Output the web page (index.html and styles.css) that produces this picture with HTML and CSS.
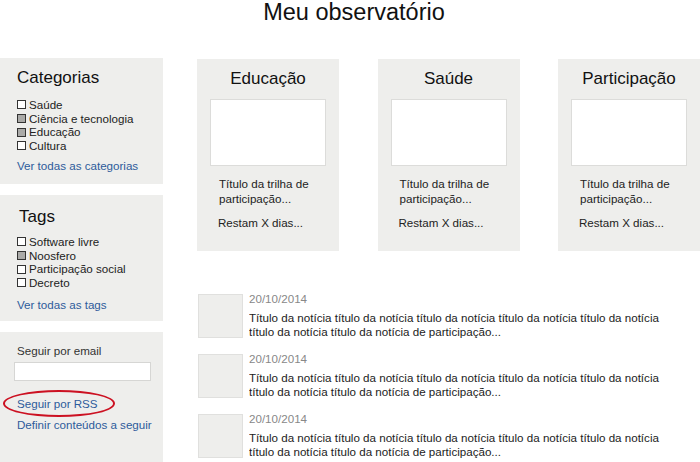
FILE: index.html
```html
<!DOCTYPE html>
<html lang="pt">
<head>
<meta charset="utf-8">
<title>Meu observatório</title>
<link rel="stylesheet" href="styles.css">
</head>
<body>
<h1 class="page-title">Meu observatório</h1>
<div class="layout">
  <aside class="sidebar">
    <section class="panel">
      <h2 class="panel-title">Categorias</h2>
      <ul class="checklist">
        <li><span class="box"></span>Saúde</li>
        <li><span class="box box-on"></span>Ciência e tecnologia</li>
        <li><span class="box box-on"></span>Educação</li>
        <li><span class="box"></span>Cultura</li>
      </ul>
      <a class="panel-link" href="#">Ver todas as categorias</a>
    </section>
    <section class="panel">
      <h2 class="panel-title panel-title-tags">Tags</h2>
      <ul class="checklist">
        <li><span class="box"></span>Software livre</li>
        <li><span class="box box-on"></span>Noosfero</li>
        <li><span class="box"></span>Participação social</li>
        <li><span class="box"></span>Decreto</li>
      </ul>
      <a class="panel-link panel-link-tags" href="#">Ver todas as tags</a>
    </section>
    <section class="panel panel-follow">
      <div class="follow-label">Seguir por email</div>
      <div class="email-input"></div>
      <div class="rss-wrap">
        <a class="panel-link" href="#">Seguir por RSS</a>
        <span class="ring"></span>
      </div>
      <a class="panel-link follow-define" href="#">Definir conteúdos a seguir</a>
    </section>
  </aside>
  <main class="content">
    <div class="cards">
      <div class="card">
        <h3 class="card-title">Educação</h3>
        <div class="card-img"></div>
        <p class="card-text">Título da trilha de<br>participação...</p>
        <p class="card-days">Restam X dias...</p>
      </div>
      <div class="card">
        <h3 class="card-title">Saúde</h3>
        <div class="card-img"></div>
        <p class="card-text">Título da trilha de<br>participação...</p>
        <p class="card-days">Restam X dias...</p>
      </div>
      <div class="card">
        <h3 class="card-title">Participação</h3>
        <div class="card-img"></div>
        <p class="card-text">Título da trilha de<br>participação...</p>
        <p class="card-days">Restam X dias...</p>
      </div>
    </div>
    <div class="news">
      <div class="news-item">
        <div class="thumb"></div>
        <div class="news-body">
          <div class="news-date">20/10/2014</div>
          <div class="news-title">Título da notícia título da notícia título da notícia título da notícia título da notícia título da notícia título da notícia de participação...</div>
        </div>
      </div>
      <div class="news-item">
        <div class="thumb"></div>
        <div class="news-body">
          <div class="news-date">20/10/2014</div>
          <div class="news-title">Título da notícia título da notícia título da notícia título da notícia título da notícia título da notícia título da notícia de participação...</div>
        </div>
      </div>
      <div class="news-item">
        <div class="thumb"></div>
        <div class="news-body">
          <div class="news-date">20/10/2014</div>
          <div class="news-title">Título da notícia título da notícia título da notícia título da notícia título da notícia título da notícia título da notícia de participação...</div>
        </div>
      </div>
    </div>
  </main>
</div>
</body>
</html>
```
FILE: styles.css
```css
* { box-sizing: border-box; }
html, body { margin: 0; padding: 0; background: #fff; }
body {
  font-family: "Liberation Sans", Arial, sans-serif;
  color: #222;
  font-size: 11.6px;
  width: 700px;
  height: 462px;
  overflow: hidden;
}
.page-title {
  margin: 0;
  height: 58px;
  font-size: 23.5px;
  line-height: 25px;
  font-weight: normal;
  text-align: center;
  color: #111;
  padding-left: 8px;
}
.layout {
  display: flex;
  align-items: flex-start;
}
.sidebar {
  width: 163px;
  flex: none;
  display: flex;
  flex-direction: column;
  gap: 11px;
}
.panel {
  background: #eeeeec;
  height: 126px;
  padding: 10px 0 0 17px;
  display: flex;
  flex-direction: column;
  align-items: flex-start;
}
.panel-title {
  margin: 0;
  font-size: 17px;
  line-height: 20px;
  font-weight: normal;
  color: #111;
}
.panel-title-tags { margin-left: 2px; padding-top: 2px; margin-bottom: -2px; }
.checklist {
  list-style: none;
  margin: 10px 0 0;
  padding: 0;
  line-height: 13.7px;
}
.checklist li { display: flex; align-items: center; }
.box {
  display: inline-block;
  width: 9px;
  height: 9px;
  border: 1px solid #333;
  background: #fff;
  margin-right: 3px;
  flex: none;
}
.box-on { background: #aaaaa8; }
.panel-link {
  color: #2d5b9b;
  text-decoration: none;
  line-height: 14px;
  margin-top: 6px;
}
.panel-link-tags { margin-top: 8px; }
.panel-follow {
  height: 140px;
  padding-top: 12px;
}
.follow-label { line-height: 14px; color: #333; }
.email-input {
  width: 137px;
  height: 19px;
  background: #fff;
  border: 1px solid #d6d6d4;
  margin: 4px 0 0 -3px;
}
.rss-wrap {
  position: relative;
  margin-top: 9px;
}
.rss-wrap .panel-link { display: block; margin-top: 7px; }
.ring {
  position: absolute;
  left: -14px;
  top: 0px;
  width: 112px;
  height: 27px;
  border: 2px solid #cc1122;
  border-radius: 50%;
}
.follow-define { margin-top: 7px; }
.content {
  flex: 1;
  margin-left: 34px;
  padding-top: 1px;
  display: flex;
  flex-direction: column;
}
.cards {
  display: flex;
  justify-content: space-between;
}
.card {
  width: 142px;
  height: 192px;
  background: #eeeeec;
  padding: 10px 0 0 0;
}
.card-title {
  margin: 0;
  font-size: 17px;
  line-height: 20px;
  font-weight: normal;
  text-align: center;
  color: #111;
}
.card-img {
  width: 116px;
  height: 67px;
  margin: 10px 0 0 13px;
  background: #fff;
  border: 1px solid #dcdcda;
}
.card-text {
  margin: 10px 0 0 22px;
  line-height: 15px;
}
.card-days {
  margin: 9px 0 0 21px;
  line-height: 15px;
}
.news {
  margin-top: 43px;
  padding-left: 1px;
  padding-right: 18px;
  display: flex;
  flex-direction: column;
  gap: 15px;
}
.news-item {
  display: flex;
  align-items: flex-start;
  gap: 6px;
}
.thumb {
  width: 45px;
  height: 44px;
  flex: none;
  background: #eeeeec;
  border: 1px solid #e0e0de;
}
.news-body {
  flex: 1;
  margin-top: -2px;
}
.news-date {
  color: #888;
  line-height: 14px;
  margin-bottom: 5px;
}
.news-title {
  line-height: 14px;
  height: 28px;
  overflow: hidden;
  color: #222;
}
```
